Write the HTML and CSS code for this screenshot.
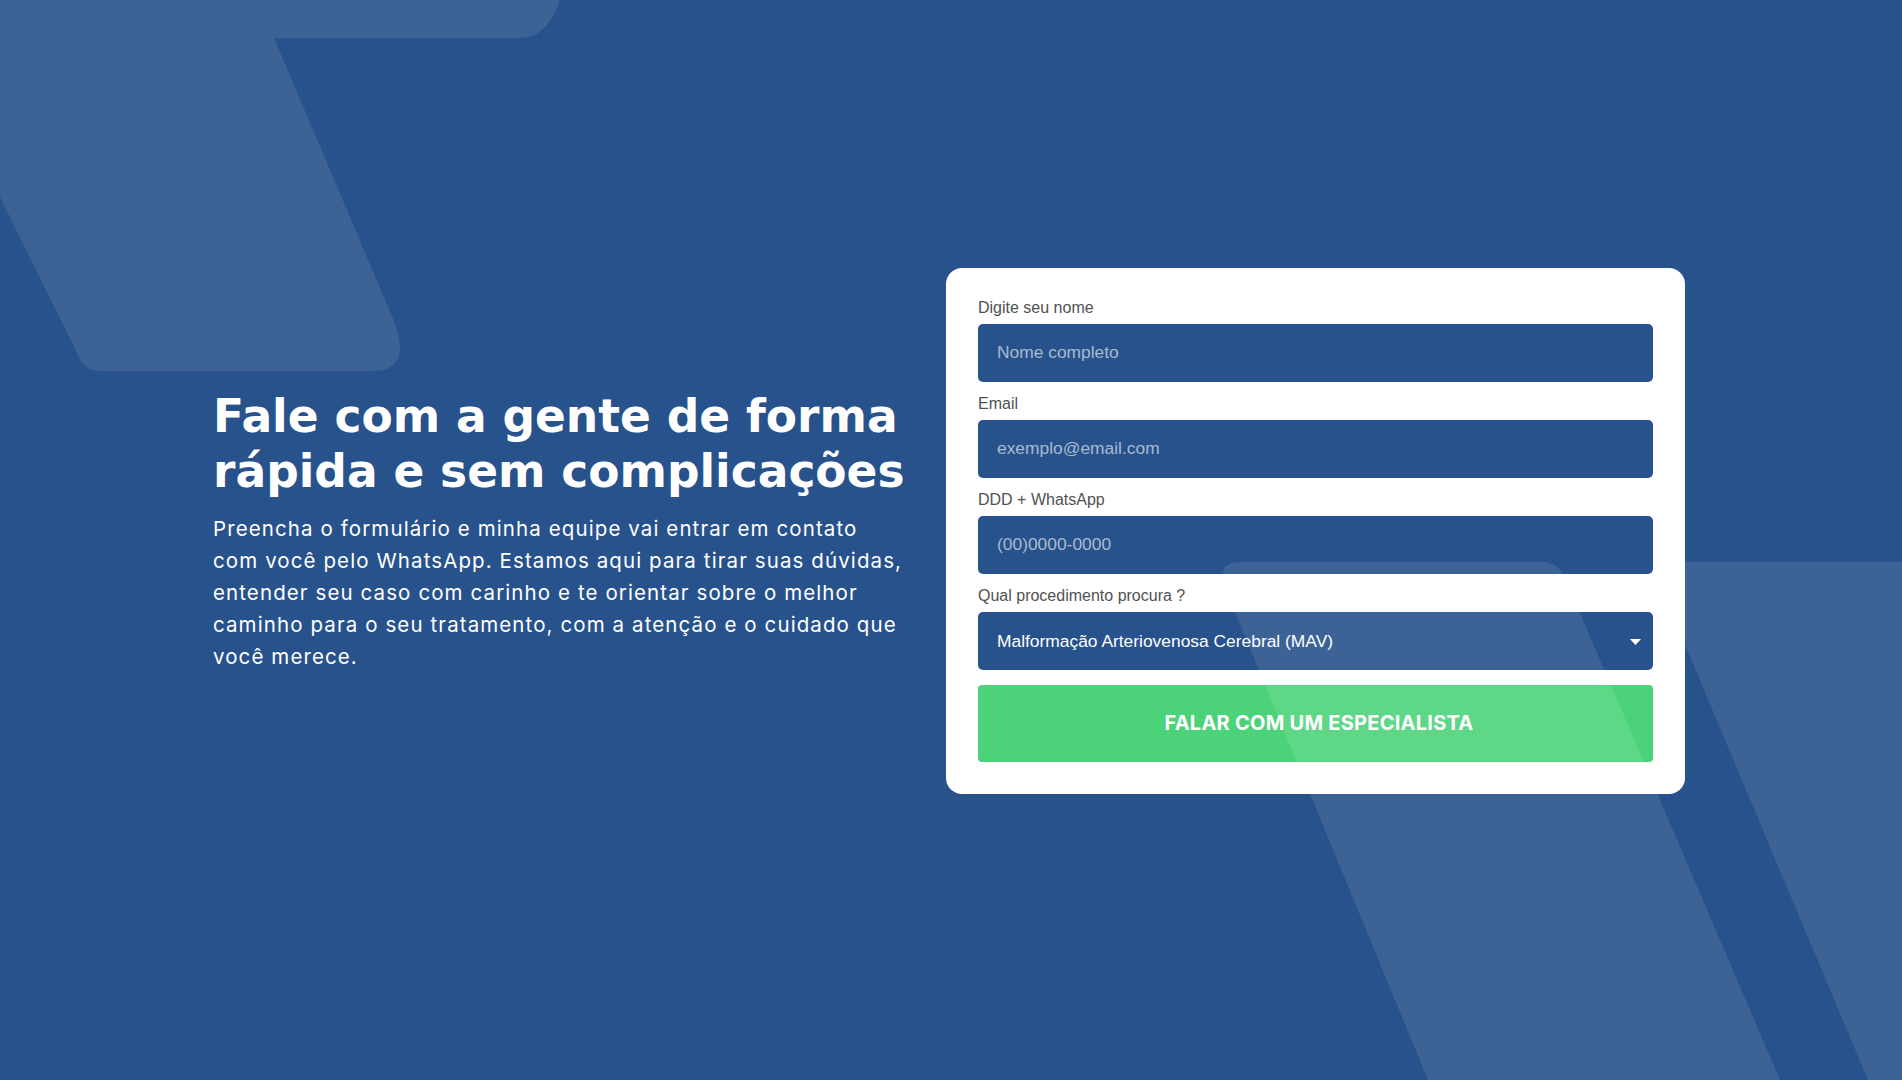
FILE: index.html
```html
<!DOCTYPE html>
<html lang="pt-BR">
<head>
<meta charset="utf-8">
<title>Fale com a gente</title>
<link rel="stylesheet" href="styles.css">
</head>
<body>
<main class="hero">
  <section class="intro">
    <h1 class="intro-title">Fale com a gente de forma rápida e sem complicações</h1>
    <p class="intro-text">Preencha o formulário e minha equipe vai entrar em contato<br>com você pelo WhatsApp. Estamos aqui para tirar suas dúvidas,<br>entender seu caso com carinho e te orientar sobre o melhor<br>caminho para o seu tratamento, com a atenção e o cuidado que<br>você merece.</p>
  </section>
  <form class="card">
    <div class="field">
      <label class="field-label" for="nome">Digite seu nome</label>
      <input class="field-input" id="nome" type="text" placeholder="Nome completo">
    </div>
    <div class="field">
      <label class="field-label" for="email">Email</label>
      <input class="field-input" id="email" type="email" placeholder="exemplo@email.com">
    </div>
    <div class="field">
      <label class="field-label" for="tel">DDD + WhatsApp</label>
      <input class="field-input" id="tel" type="tel" placeholder="(00)0000-0000">
    </div>
    <div class="field">
      <label class="field-label" for="proc">Qual procedimento procura ?</label>
      <div class="select-wrap">
        <select class="field-input field-select" id="proc">
          <option>Malformação Arteriovenosa Cerebral (MAV)</option>
        </select>
        <svg class="select-arrow" width="11" height="6" viewBox="0 0 11 6"><path d="M0 0H11L5.5 6Z" fill="#ffffff"/></svg>
      </div>
    </div>
    <button class="submit" type="button">FALAR COM UM ESPECIALISTA</button>
  </form>
</main>
<svg class="decor" width="1902" height="1080" viewBox="0 0 1902 1080" aria-hidden="true">
  <path d="M0 0H560C553 20 542 38 520 38H274L392 316Q415 371 372 371H100Q86 371 80 359L0 197Z"/>
  <path d="M1240 562H1542Q1558 562 1565 578L1780 1080H1428L1226 590Q1215 562 1240 562Z"/>
  <path d="M1680 562H1902V1080H1868L1662 590Q1654 562 1680 562Z"/>
</svg>
</body>
</html>
```

FILE: styles.css
```css
* { box-sizing: border-box; }

html, body {
  margin: 0;
  padding: 0;
}

body {
  width: 1902px;
  height: 1080px;
  overflow: hidden;
  position: relative;
  background: #27528b;
  font-family: "Liberation Sans", Arial, sans-serif;
}

.hero {
  height: 1080px;
  padding: 0 0 19px 213px;
  display: flex;
  align-items: center;
  justify-content: flex-start;
  gap: 33px;
}

.intro {
  flex: 0 0 700px;
  color: #ffffff;
}

.intro-title {
  margin: 0 0 14px;
  font-family: "DejaVu Sans", Verdana, sans-serif;
  font-weight: 700;
  font-size: 45.5px;
  line-height: 55px;
  letter-spacing: 0;
}

.intro-text {
  margin: 0;
  white-space: nowrap;
  font-family: Inter, "Liberation Sans", sans-serif;
  font-weight: 400;
  font-size: 20.5px;
  line-height: 32px;
  letter-spacing: 1.1px;
}

.card {
  flex: 0 0 739px;
  background: #ffffff;
  border-radius: 16px;
  padding: 30px 32px 32px;
  display: flex;
  flex-direction: column;
}

.field {
  display: flex;
  flex-direction: column;
  margin-bottom: 12px;
}

.field:nth-child(4) {
  margin-bottom: 15px;
}

.field-label {
  font-size: 16px;
  line-height: 19px;
  color: #515151;
  margin-bottom: 7px;
}

.field-input {
  height: 58px;
  width: 100%;
  border: none;
  outline: none;
  border-radius: 5px;
  background: #27528b;
  color: #ffffff;
  padding: 0 19px;
  font-family: "Liberation Sans", Arial, sans-serif;
  font-size: 17.4px;
}

.field-input::placeholder {
  color: #a9bad1;
  opacity: 1;
}

.select-wrap {
  position: relative;
}

.field-select {
  appearance: none;
  -webkit-appearance: none;
}

.select-arrow {
  position: absolute;
  right: 12px;
  top: 27px;
}

.submit {
  height: 77px;
  border: none;
  border-radius: 4px;
  background: #4cd37a;
  color: #ffffff;
  padding: 0 0 0 7px;
  font-family: Inter, "Liberation Sans", sans-serif;
  font-weight: 700;
  font-size: 20px;
  letter-spacing: 0.25px;
  cursor: pointer;
}

.decor {
  position: absolute;
  left: 0;
  top: 0;
  pointer-events: none;
  fill: rgba(255, 255, 255, 0.1);
}
```
